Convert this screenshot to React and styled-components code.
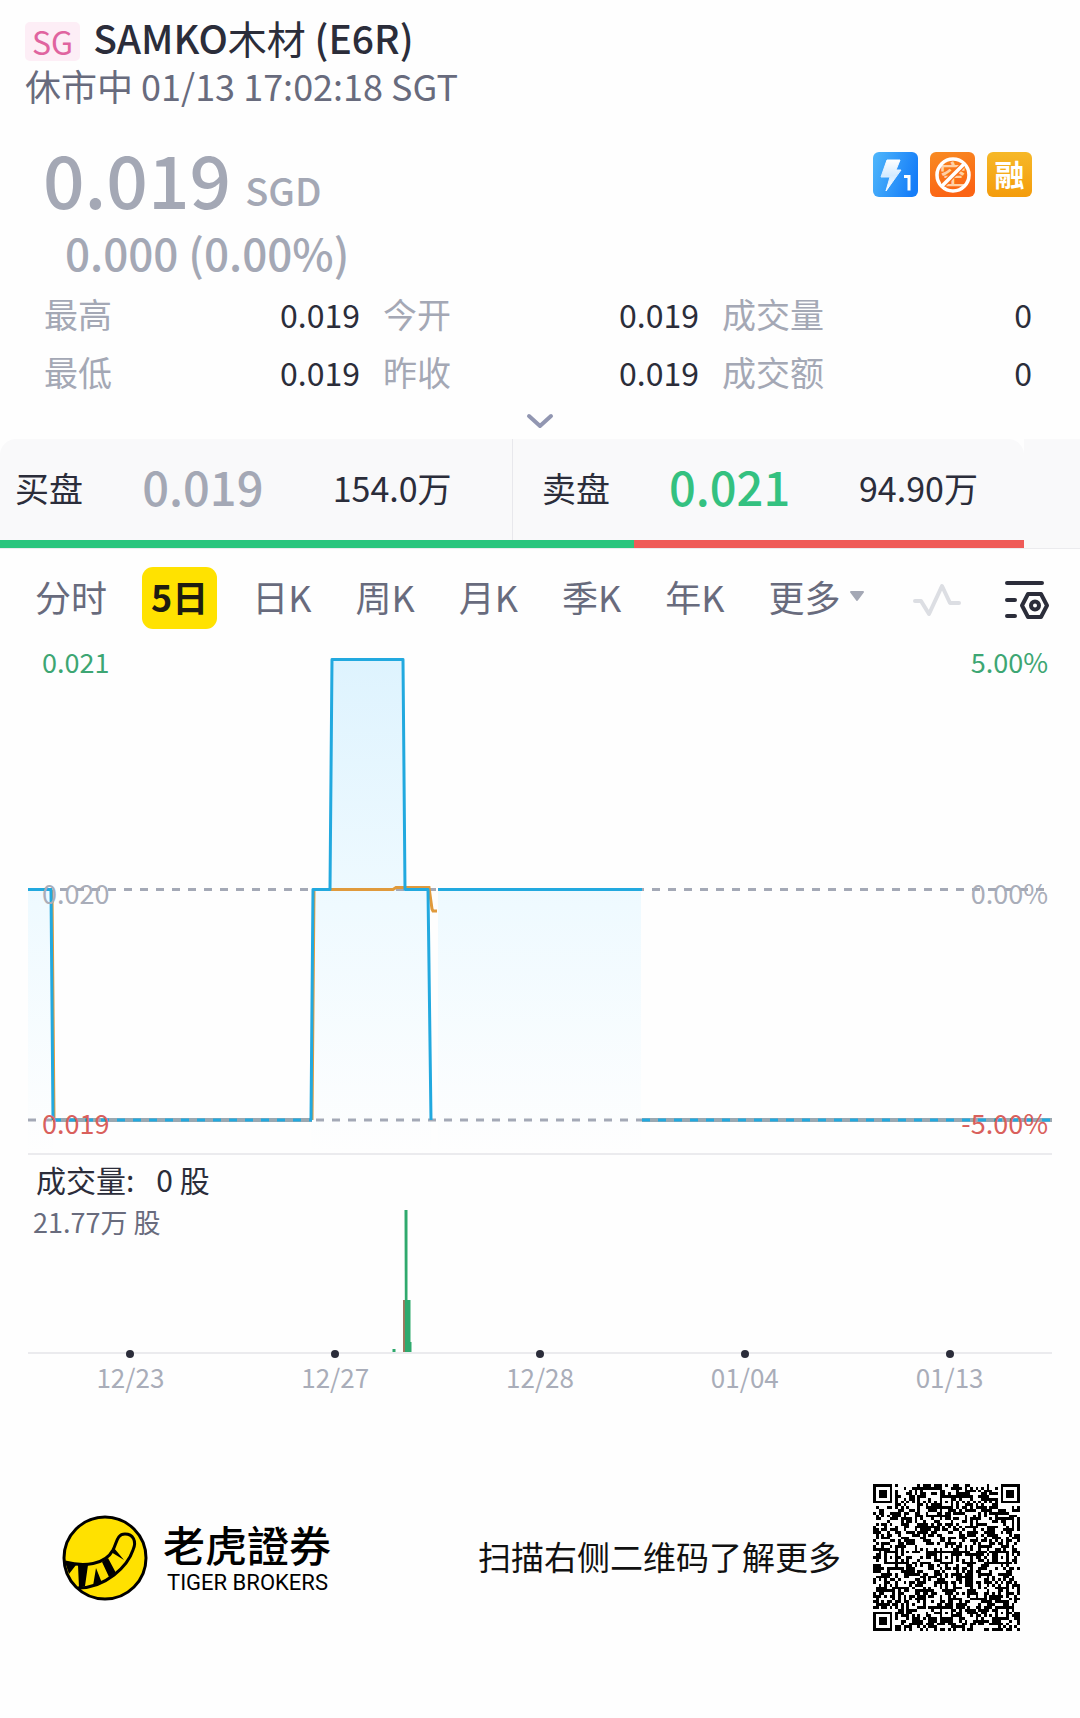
import React from "react";
import styled, { createGlobalStyle } from "styled-components";

const GlobalStyle = createGlobalStyle`
  * {
    box-sizing: border-box;
  }
  body {
    margin: 0;
    background: #fefefe;
    color: #2b2d3a;
    font-family: "Noto Sans CJK SC", "Noto Sans", sans-serif;
  }
  h1, h2, p, dl, dd, ol {
    margin: 0;
    padding: 0;
  }
`;

const Page = styled.main`
  width: 100%;
`;

const Header = styled.header`
  padding: 8px 25px 0;
`;

const TitleRow = styled.div`
  display: flex;
  align-items: center;
  gap: 13px;
  height: 58px;
`;

const Market = styled.span`
  margin-top: 8px;
  padding: 0 7px;
  border-radius: 5px;
  background: #fdeef6;
  color: #e0649f;
  font-size: 32px;
  line-height: 39px;
`;

const Title = styled.h1`
  font-size: 39px;
  font-weight: 500;
  line-height: 56px;
  span {
    font-weight: 400;
  }
`;

const Status = styled.p`
  color: #686b7d;
  font-size: 36px;
  line-height: 38px;
`;

const Quote = styled.section`
  display: flex;
  justify-content: space-between;
  align-items: flex-start;
  padding: 37px 48px 10px 43px;
  color: #a4a8b5;
`;

const Price = styled.p`
  padding-bottom: 16px;
  font-size: 73px;
  font-weight: 500;
  line-height: 72px;
`;

const Currency = styled.span`
  margin-left: 14px;
  font-size: 38px;
  line-height: 38px;
  vertical-align: 3px;
`;

const Change = styled.p`
  padding-left: 22px;
  font-size: 44px;
  font-weight: 500;
  line-height: 46px;
`;

const Badges = styled.div`
  display: flex;
  gap: 12px;
  padding-top: 11px;
  svg {
    display: block;
  }
`;

const Stats = styled.dl`
  display: grid;
  grid-template-columns: 316fr 316fr 310fr;
  column-gap: 23px;
  padding: 0 48px 0 44px;
`;

const Stat = styled.div`
  display: flex;
  justify-content: space-between;
  line-height: 58px;
  dt {
    color: #a4a8b5;
    font-size: 34px;
  }
  dd {
    font-size: 32px;
  }
`;

const Expand = styled.button`
  display: block;
  margin: 0 auto;
  padding: 11px 20px 9px;
  border: 0;
  background: none;
  svg {
    display: block;
  }
`;

const Book = styled.section`
  padding-right: 56px;
  background: linear-gradient(to left, #f9f9fa 56px, #fefefe 56px);
  border-bottom: 1px solid #ebebee;
`;

const BookRow = styled.div`
  display: grid;
  grid-template-columns: 1fr 1fr;
  height: 101px;
  border-radius: 16px 16px 0 0;
  background: #f9f9fa;
`;

const Side = styled.div`
  display: grid;
  grid-template-columns: 127fr 190fr 165fr;
  align-items: center;
  padding: ${props => (props.$ask ? "0 0 4px 29px" : "0 14px 4px 15px")};
  border-left: ${props => (props.$ask ? "1px solid #e8e8ec" : "0")};
  font-size: 34px;
  white-space: nowrap;
`;

const SidePrice = styled.span`
  padding-bottom: 3px;
  color: ${props => props.$color};
  font-size: 47px;
  font-weight: 500;
  line-height: 60px;
`;

const Ratio = styled.div`
  display: flex;
  height: 8px;
  background: #ef5b58;
`;

const RatioBid = styled.div`
  background: #2bc57e;
`;

const Toolbar = styled.nav`
  display: flex;
  align-items: center;
  justify-content: space-between;
  padding: 18px 30px 0 26px;
`;

const Tabs = styled.div`
  display: flex;
  gap: 26px;
`;

const Tab = styled.button`
  display: flex;
  align-items: center;
  gap: 8px;
  height: 62px;
  padding: 0 9px 4px;
  border: 0;
  border-radius: 11px;
  background: ${props => (props.$active ? "#ffe200" : "none")};
  color: ${props => (props.$active ? "#1e1c10" : "#686b7d")};
  font-family: inherit;
  font-size: 36px;
  font-weight: ${props => (props.$active ? 700 : 400)};
  white-space: nowrap;
`;

const Tools = styled.div`
  display: flex;
  align-items: center;
  gap: 42px;
`;

const IconButton = styled.button`
  padding: 4px 0 0;
  border: 0;
  background: none;
  svg {
    display: block;
  }
`;

const Chart = styled.section`
  position: relative;
  margin: 22px 28px 0;
  border-bottom: 2px solid #ebebee;
  svg {
    display: block;
    width: 100%;
    height: 502px;
  }
`;

// sits over the grid line it names
const AxisLabel = styled.span`
  position: absolute;
  top: ${props => props.$top}px;
  left: ${props => (props.$right ? "auto" : "14px")};
  right: ${props => (props.$right ? "4px" : "auto")};
  color: ${props => props.$color};
  font-size: 27px;
  line-height: 30px;
`;

const Volume = styled.section`
  position: relative;
  height: 199px;
  margin: 0 28px;
  border-bottom: 2px solid #ebebee;
  svg {
    position: absolute;
    left: 0;
    bottom: 0;
    width: 100%;
    height: 144px;
  }
`;

const VolumeTitle = styled.h2`
  padding: 2px 8px 0;
  font-size: 30px;
  font-weight: 400;
  line-height: 44px;
  span {
    margin-left: 22px;
  }
`;

const VolumeMax = styled.p`
  padding-left: 5px;
  color: #686b7d;
  font-size: 27px;
  line-height: 42px;
`;

const Dates = styled.ol`
  display: grid;
  grid-template-columns: repeat(5, 1fr);
  margin: -4px 28px 0;
  list-style: none;
`;

const DateItem = styled.li`
  display: flex;
  flex-direction: column;
  align-items: center;
  color: #a9adb9;
  font-size: 26px;
  line-height: 38px;
  &::before {
    content: "";
    position: relative;
    width: 8px;
    height: 8px;
    border-radius: 50%;
    background: #2b2d3a;
  }
`;

const Footer = styled.footer`
  display: flex;
  align-items: center;
  justify-content: space-between;
  margin-top: 88px;
  padding: 0 60px 80px 62px;
`;

const Brand = styled.div`
  display: flex;
  align-items: center;
  gap: 15px;
  color: #000;
`;

const BrandName = styled.p`
  font-size: 42px;
  font-weight: 500;
  line-height: 48px;
`;

const BrandLatin = styled.p`
  padding: 2px 0 0 4px;
  font-family: Roboto, sans-serif;
  font-size: 22px;
  line-height: 26px;
`;

const Invite = styled.div`
  display: flex;
  align-items: center;
  gap: 32px;
  color: #111;
  font-size: 33px;
  p {
    padding-bottom: 4px;
  }
`;

const stats = [
  ["最高", "0.019"],
  ["今开", "0.019"],
  ["成交量", "0"],
  ["最低", "0.019"],
  ["昨收", "0.019"],
  ["成交额", "0"]
];

const tabs = ["分时", "5日", "日K", "周K", "月K", "季K", "年K", "更多"];

const dates = ["12/23", "12/27", "12/28", "01/04", "01/13"];

const LevelBadge = () => (
  <svg width="45" height="45" viewBox="0 0 45 45">
    <defs>
      <linearGradient id="level" x1="0" y1="0.2" x2="1" y2="0.5">
        <stop offset="0" stopColor="#4db4fb" />
        <stop offset="1" stopColor="#157df8" />
      </linearGradient>
      <linearGradient id="bolt" x1="0" y1="0" x2="0" y2="1">
        <stop offset="0" stopColor="#fff" />
        <stop offset="0.5" stopColor="#d3eaff" />
        <stop offset="1" stopColor="#fff" />
      </linearGradient>
    </defs>
    <rect width="45" height="45" rx="6" fill="url(#level)" />
    <path
      d="M14 8h13l-4 10h5L13 39l4-14H8z"
      fill="url(#bolt)"
      stroke="url(#bolt)"
      strokeLinejoin="round"
    />
    <path d="M31 24.500h5v14" fill="none" stroke="#fff" strokeWidth="3" />
  </svg>
);

const NoShortBadge = () => (
  <svg width="45" height="45" viewBox="0 0 45 45">
    <defs>
      <linearGradient id="short" x1="0" y1="0" x2="0.3" y2="1">
        <stop offset="0" stopColor="#f88b22" />
        <stop offset="1" stopColor="#fb6414" />
      </linearGradient>
    </defs>
    <rect width="45" height="45" rx="6" fill="url(#short)" />
    <text x="23" y="33" fontSize="27" fontWeight="500" textAnchor="middle" fill="#ffd0a6">
      空
    </text>
    <circle cx="23" cy="23" r="16" fill="none" stroke="#fff" strokeWidth="3.500" />
    <path d="M13 33L33 13" stroke="#f9701a" strokeWidth="6" />
    <path d="M11.500 34.500L34.500 11.500" stroke="#fff" strokeWidth="3.500" />
  </svg>
);

const MarginBadge = () => (
  <svg width="45" height="45" viewBox="0 0 45 45">
    <defs>
      <linearGradient id="margin" x1="0" y1="0" x2="0" y2="1">
        <stop offset="0" stopColor="#f6b828" />
        <stop offset="1" stopColor="#f49c0c" />
      </linearGradient>
    </defs>
    <rect width="45" height="45" rx="6" fill="url(#margin)" />
    <text x="22.500" y="34" fontSize="30" fontWeight="700" textAnchor="middle" fill="#fff">
      融
    </text>
  </svg>
);

const PriceChart = () => (
  <svg viewBox="0 0 1024 502" preserveAspectRatio="none">
    <defs>
      <linearGradient id="area" gradientUnits="userSpaceOnUse" x1="0" y1="8" x2="0" y2="502">
        <stop offset="0" stopColor="#def3fe" />
        <stop offset="0.5" stopColor="#effaff" />
        <stop offset="1" stopColor="#fefefe" />
      </linearGradient>
    </defs>
    <path
      d="M0 502V238H23L25 470V502zM283 502V470L285 238H302L304 8H375L377 238H400L403 470V502zM410 502V238H613V502z"
      fill="url(#area)"
    />
    <g fill="none" strokeWidth="3">
      <path
        d="M0 238.500H1024M0 469H1024"
        stroke="#a4a9b6"
        strokeDasharray="8 8"
      />
      <path
        d="M24 239L26 470M284 469L286 238M302 238.500H365L368 236.500H401L404 258L405 260H409"
        stroke="#e09a3c"
      />
      <path d="M25 469H284M614 469H1024" stroke="#9ba8b1" strokeWidth="4" />
      <path
        d="M25 469H284M614 469H1024"
        stroke="#22a9df"
        strokeDasharray="8 8"
      />
      <path
        d="M0 238.500H23L25 469M283 469L285 238.500H302L304 8.500H375L377 238.500H400L403 469M410 238.500H614"
        stroke="#22a9df"
        strokeLinejoin="round"
      />
    </g>
  </svg>
);

const VolumeBars = () => (
  <svg viewBox="0 0 1024 144" preserveAspectRatio="none">
    <path d="M375 92h3v52h-3z" fill="#a0765e" />
    <path d="M376.500 2h3v90h3v42h1v10h-6.500z" fill="#2fa96d" />
    <path d="M364.500 141h3v3h-3z" fill="#2fa96d" />
  </svg>
);

const TigerLogo = () => (
  <svg width="86" height="86" viewBox="0 0 86 86">
    <circle cx="43" cy="43" r="41" fill="#ffe100" stroke="#000" strokeWidth="3" />
    <path
      d="M3 47C22 52 43 50 51 35C55 27 55 19 63 19C71 19 75 26 71 35C68 44 61 53 52 60C43 67 32 73 16 73"
      fill="none"
      stroke="#000"
      strokeWidth="3"
    />
    <path
      d="M3 47L14 50L7 59zM16 50H26L23 71L17 73zM34 53L40 68L31 71zM40 47L46 43L54 58L47 62zM49 37L52 33L62 45z"
      fill="#000"
    />
  </svg>
);

const SIZE = 53;

const inFinder = (x, y) =>
  (x < 8 && y < 8) || (x >= SIZE - 8 && y < 8) || (x < 8 && y >= SIZE - 8);

const rings = (cx, cy, radii) => (x, y) => {
  const d = Math.max(Math.abs(x - cx), Math.abs(y - cy));
  return radii.includes(d);
};

const finders = [
  rings(3, 3, [0, 1, 3]),
  rings(SIZE - 4, 3, [0, 1, 3]),
  rings(3, SIZE - 4, [0, 1, 3])
];

const anchors = [
  [26, 6],
  [6, 26],
  [26, 26],
  [46, 26],
  [26, 46],
  [46, 46]
];

const buildCode = () => {
  let seed = 20117;
  let d = "";
  for (let y = 0; y < SIZE; y++) {
    for (let x = 0; x < SIZE; x++) {
      seed = (seed * 1103515245 + 12345) % 2147483648;
      let dark = seed / 2147483648 > 0.5;
      const anchor = anchors.find(
        ([ax, ay]) => Math.abs(ax - x) < 3 && Math.abs(ay - y) < 3
      );
      if (inFinder(x, y)) {
        dark = finders.some(hit => hit(x, y));
      } else if (anchor) {
        dark = rings(anchor[0], anchor[1], [0, 2])(x, y);
      } else if (x === 6 || y === 6) {
        dark = (x + y) % 2 === 0;
      }
      if (dark) d += `M${x} ${y}h1v1h-1z`;
    }
  }
  return d;
};

const QrCode = () => (
  <svg width="147" height="147" viewBox="0 0 53 53" shapeRendering="crispEdges">
    <path d={buildCode()} fill="#000" />
  </svg>
);

const App = () => {
  const bid = 154.0;
  const ask = 94.9;

  return (
    <Page>
      <GlobalStyle />
      <Header>
        <TitleRow>
          <Market>SG</Market>
          <Title>
            SAMKO<span>木材</span> (E6R)
          </Title>
        </TitleRow>
        <Status>休市中 01/13 17:02:18 SGT</Status>
      </Header>

      <Quote>
        <div>
          <Price>
            0.019
            <Currency>SGD</Currency>
          </Price>
          <Change>0.000 (0.00%)</Change>
        </div>
        <Badges>
          <LevelBadge />
          <NoShortBadge />
          <MarginBadge />
        </Badges>
      </Quote>

      <Stats>
        {stats.map(([label, value]) => (
          <Stat key={label}>
            <dt>{label}</dt>
            <dd>{value}</dd>
          </Stat>
        ))}
      </Stats>

      <Expand aria-label="展开">
        <svg width="28" height="18" viewBox="0 0 28 18">
          <path
            d="M3 4l11 10L25 4"
            fill="none"
            stroke="#9196b1"
            strokeWidth="4"
            strokeLinecap="round"
            strokeLinejoin="round"
          />
        </svg>
      </Expand>

      <Book>
        <BookRow>
          <Side>
            <span>买盘</span>
            <SidePrice $color="#a4a8b5">0.019</SidePrice>
            <span>154.0万</span>
          </Side>
          <Side $ask>
            <span>卖盘</span>
            <SidePrice $color="#34c180">0.021</SidePrice>
            <span>94.90万</span>
          </Side>
        </BookRow>
        <Ratio>
          <RatioBid style={{ width: `${(bid / (bid + ask)) * 100}%` }} />
        </Ratio>
      </Book>

      <Toolbar>
        <Tabs>
          {tabs.map(tab => (
            <Tab key={tab} $active={tab === "5日"}>
              {tab}
              {tab === "更多" && (
                <svg width="16" height="12" viewBox="0 0 16 12">
                  <path
                    d="M2 2h12L8 10z"
                    fill="#a4a8b5"
                    stroke="#a4a8b5"
                    strokeWidth="2"
                    strokeLinejoin="round"
                  />
                </svg>
              )}
            </Tab>
          ))}
        </Tabs>
        <Tools>
          <IconButton aria-label="走势">
            <svg width="50" height="36" viewBox="0 0 50 36">
              <path
                d="M3 19h6l8 13L30 4l8 17h9"
                fill="none"
                stroke="#dcdee3"
                strokeWidth="4"
                strokeLinecap="round"
                strokeLinejoin="round"
              />
            </svg>
          </IconButton>
          <IconButton aria-label="设置">
            <svg width="46" height="42" viewBox="0 0 46 42">
              <g
                fill="none"
                stroke="#2b2d3a"
                strokeWidth="4"
                strokeLinecap="round"
                strokeLinejoin="round"
              >
                <path d="M3 4h35M3 21h8M3 37h8" />
                <path d="M24 15h13l6 11.500L37 38H24l-6-11.500z" />
                <circle cx="31" cy="26.500" r="4" />
              </g>
            </svg>
          </IconButton>
        </Tools>
      </Toolbar>

      <Chart>
        <PriceChart />
        <AxisLabel $top={-4} $color="#3da673">0.021</AxisLabel>
        <AxisLabel $top={-4} $color="#3da673" $right>5.00%</AxisLabel>
        <AxisLabel $top={227} $color="#a9adb9">0.020</AxisLabel>
        <AxisLabel $top={227} $color="#a9adb9" $right>0.00%</AxisLabel>
        <AxisLabel $top={457} $color="#d9605c">0.019</AxisLabel>
        <AxisLabel $top={457} $color="#d9605c" $right>-5.00%</AxisLabel>
      </Chart>

      <Volume>
        <VolumeTitle>
          成交量:<span>0 股</span>
        </VolumeTitle>
        <VolumeMax>21.77万 股</VolumeMax>
        <VolumeBars />
      </Volume>
      <Dates>
        {dates.map(date => (
          <DateItem key={date}>{date}</DateItem>
        ))}
      </Dates>

      <Footer>
        <Brand>
          <TigerLogo />
          <div>
            <BrandName>老虎證券</BrandName>
            <BrandLatin>TIGER BROKERS</BrandLatin>
          </div>
        </Brand>
        <Invite>
          <p>扫描右侧二维码了解更多</p>
          <QrCode />
        </Invite>
      </Footer>
    </Page>
  );
};

export default App;
